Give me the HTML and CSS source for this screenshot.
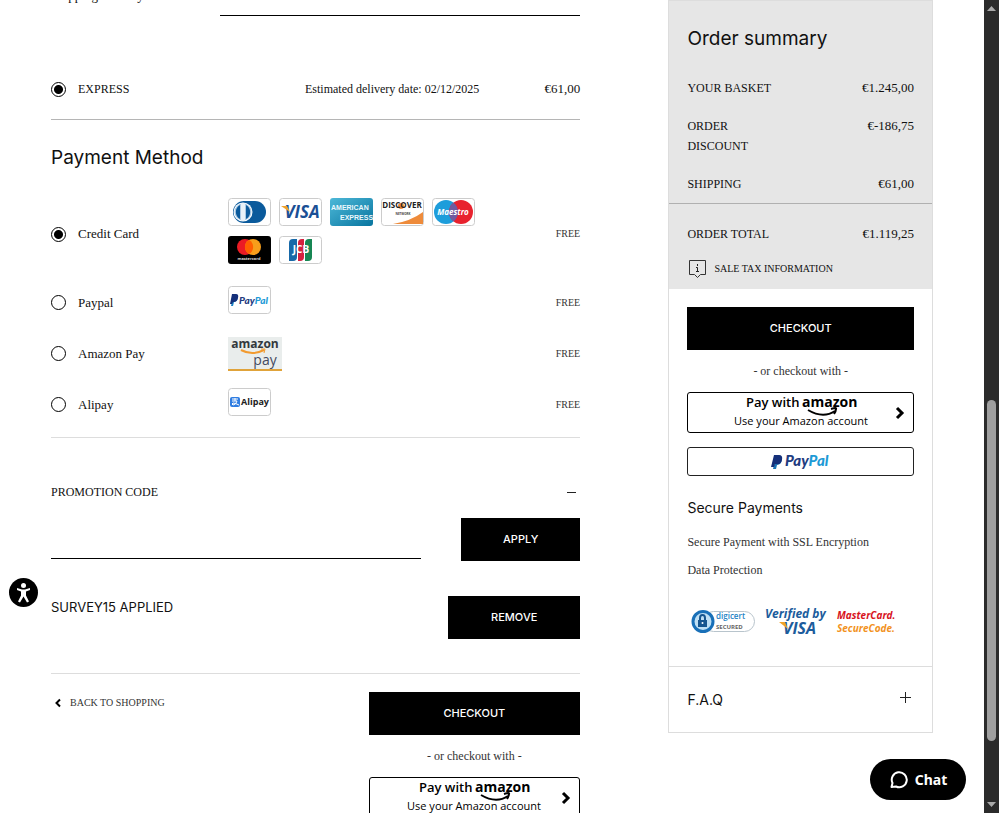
FILE: index.html
```html
<!DOCTYPE html>
<html lang="en">

<head>
    <meta charset="utf-8">
    <meta name="viewport" content="width=device-width, initial-scale=1">
    <title>Checkout</title>
    <link rel="stylesheet" href="styles.css">
</head>

<body>
    <div class="page">
        <main class="checkout">
            <div class="country-row">
                <label for="country">Shipping Country</label>
                <select id="country" class="country-select">
                    <option></option>
                </select>
            </div>

            <div class="shipping-row">
                <label class="choice"><input type="radio" name="shipping" checked><span class="caps">EXPRESS</span></label>
                <span class="note">Estimated delivery date: 02/12/2025</span>
                <span class="price">€61,00</span>
            </div>

            <h2 class="section-title">Payment Method</h2>
            <div class="methods">
                <div class="method method-cards">
                    <label class="choice"><input type="radio" name="payment" checked>Credit Card</label>
                    <div class="cards">
                        <svg class="card" viewBox="0 0 43 28">
                            <rect x=".5" y=".5" width="42" height="27" rx="3" fill="#fff" stroke="#ccc"/>
                            <path d="M15 3h12a11 11 0 0 1 0 22H15z" fill="#0a5a9c"/>
                            <circle cx="16" cy="14" r="11" fill="#0a5a9c"/>
                            <circle cx="15" cy="14" r="9.5" fill="#fff"/>
                            <circle cx="15" cy="14" r="8.5" fill="#a9c9e4"/>
                            <path d="M12 7a8 8 0 0 0 0 14zM18 7a8 8 0 0 1 0 14z" fill="#0a5a9c"/>
                            <path d="M13 5h4v18h-4z" fill="#e8f1f8"/>
                        </svg>
                        <svg class="card" viewBox="0 0 43 28">
                            <rect x=".5" y=".5" width="42" height="27" rx="3" fill="#fff" stroke="#ccc"/>
                            <text x="23" y="20" text-anchor="middle" class="logo-text logo-italic" font-size="17" fill="#1a4f95">VISA</text>
                            <path d="M2 8h6l3 6z" fill="#f0a32c"/>
                        </svg>
                        <svg class="card" viewBox="0 0 43 28">
                            <defs>
                                <linearGradient id="amex" x2="1" y2="1">
                                    <stop offset="0" stop-color="#4db8d8"/>
                                    <stop offset="1" stop-color="#08759f"/>
                                </linearGradient>
                            </defs>
                            <rect width="43" height="28" rx="3" fill="url(#amex)"/>
                            <text x="1" y="12" class="logo-amex" font-size="7">AMERICAN</text>
                            <text x="10" y="22" class="logo-amex" font-size="7">EXPRESS</text>
                        </svg>
                        <svg class="card" viewBox="0 0 43 28">
                            <rect x=".5" y=".5" width="42" height="27" rx="3" fill="#fff" stroke="#ccc"/>
                            <path d="M12 26q18-3 30-12v12z" fill="#ee8b3b"/>
                            <circle cx="20" cy="8" r="3" fill="#ee8b3b"/>
                            <text x="21" y="10" text-anchor="middle" class="logo-text" font-size="8" fill="#222">DISCOVER</text>
                            <text x="22" y="17" text-anchor="middle" class="logo-text" font-size="3" fill="#444">NETWORK</text>
                        </svg>
                        <svg class="card" viewBox="0 0 43 28">
                            <rect x=".5" y=".5" width="42" height="27" rx="3" fill="#fff" stroke="#ccc"/>
                            <circle cx="14" cy="14" r="12" fill="#1d9ddb"/>
                            <circle cx="29" cy="14" r="12" fill="#e8222e"/>
                            <path d="M21.500 4.600a12 12 0 0 1 0 18.800a12 12 0 0 1 0-18.800z" fill="#705aa0"/>
                            <text x="21" y="17" text-anchor="middle" class="logo-text logo-italic" font-size="8" fill="#fff">Maestro</text>
                        </svg>
                        <svg class="card" viewBox="0 0 43 28">
                            <rect width="43" height="28" rx="3"/>
                            <circle cx="17" cy="11" r="8" fill="#eb1b24"/>
                            <circle cx="25" cy="11" r="8" fill="#f79e1b"/>
                            <path d="M21 4a8 8 0 0 1 0 14a8 8 0 0 1 0-14z" fill="#ff5f00"/>
                            <text x="21" y="24" text-anchor="middle" class="logo-text" font-size="4" fill="#ddd">mastercard</text>
                        </svg>
                        <svg class="card" viewBox="0 0 43 28">
                            <rect x=".5" y=".5" width="42" height="27" rx="3" fill="#fff" stroke="#ccc"/>
                            <path d="M14 3h4v18q0 4-4 4h-4V7q0-4 4-4z" fill="#1769a8"/>
                            <path d="M23 3h2v18q0 4-4 4h-2V7q0-4 4-4z" fill="#d4213f"/>
                            <path d="M30 3h3v18q0 4-4 4h-3V7q0-4 4-4z" fill="#168653"/>
                            <text x="22" y="17" text-anchor="middle" class="logo-text" font-size="10" fill="#fff">JCB</text>
                        </svg>
                    </div>
                    <span class="fee">FREE</span>
                </div>
                <div class="method">
                    <label class="choice"><input type="radio" name="payment">Paypal</label>
                    <div class="cards">
                        <svg class="card" viewBox="0 0 43 28">
                            <rect x=".5" y=".5" width="42" height="27" rx="3" fill="#fff" stroke="#ccc"/>
                            <path d="M9 10q2 5-3 6l-1 4H3l1-4z" fill="#1b84c6"/>
                            <path d="M4 8h4q3 0 2 4t-4 4H5l-1 2H2z" fill="#15307a"/>
                            <text x="11" y="18" class="logo-paypal" font-size="10"><tspan fill="#213b80">Pay</tspan><tspan fill="#1d9ad6">Pal</tspan></text>
                        </svg>
                    </div>
                    <span class="fee">FREE</span>
                </div>
                <div class="method">
                    <label class="choice"><input type="radio" name="payment">Amazon Pay</label>
                    <svg class="amazon-card" viewBox="0 0 54 34">
                        <rect width="54" height="34" fill="#e9edec"/>
                        <rect y="32" width="54" height="2" fill="#e0a33a"/>
                        <text x="27" y="11" text-anchor="middle" class="logo-text" font-size="12" fill="#33393d">amazon</text>
                        <path d="M13 13q11 6 23 0" fill="none" stroke="#f29a2e" stroke-width="2"/>
                        <path d="M33 12h4l-1 4" fill="none" stroke="#f29a2e"/>
                        <text x="37" y="28" text-anchor="middle" class="logo-pay" font-size="14">pay</text>
                    </svg>
                    <span class="fee">FREE</span>
                </div>
                <div class="method">
                    <label class="choice"><input type="radio" name="payment">Alipay</label>
                    <div class="cards">
                        <svg class="card" viewBox="0 0 43 28">
                            <rect x=".5" y=".5" width="42" height="27" rx="3" fill="#fff" stroke="#ccc"/>
                            <rect x="2" y="9" width="10" height="10" rx="2" fill="#2f7de1"/>
                            <path d="M4 11h6M7 10v3M4 13h5q-1 4-4 4q-2-1 0-2q2 0 6 2" fill="none" stroke="#fff"/>
                            <text x="27" y="17" text-anchor="middle" class="logo-text" font-size="9" fill="#222">Alipay</text>
                        </svg>
                    </div>
                    <span class="fee">FREE</span>
                </div>
            </div>

            <div class="promo">
                <label class="promo-head" for="promo">
                    <span class="caps">PROMOTION CODE</span>
                    <svg class="sign" viewBox="0 0 17 12"><path d="M4 6.500h9" stroke="#222"/></svg>
                </label>
                <div class="promo-form">
                    <input type="text" id="promo" class="promo-input">
                    <button class="btn btn-apply">APPLY</button>
                </div>
                <div class="promo-applied">
                    <span class="applied">SURVEY15 APPLIED</span>
                    <button class="btn btn-remove">REMOVE</button>
                </div>
            </div>

            <div class="actions">
                <a class="back" href="#">
                    <svg class="back-icon" viewBox="0 0 8 10"><path d="M6 1.500L2.500 5L6 8.500" fill="none" stroke="#000" stroke-width="2"/></svg>
                    BACK TO SHOPPING
                </a>
                <div class="pay-buttons">
                    <button class="btn">CHECKOUT</button>
                    <p class="or">- or checkout with -</p>
                    <button class="amazon-btn">
                        <svg class="amazon-logo" viewBox="0 0 140 39">
                            <text x="15" y="14" class="amazon-with" font-size="13">Pay with</text>
                            <text x="71" y="14" class="logo-text" font-size="14">amazon</text>
                            <path d="M77 17q15 9 27 1" fill="none" stroke="#000" stroke-width="2"/>
                            <path d="M100 16q6-2 5 0q0 2-2 5" fill="none" stroke="#000" stroke-width="2"/>
                            <text x="70" y="32" text-anchor="middle" class="amazon-use" font-size="11">Use your Amazon account</text>
                        </svg>
                        <svg class="amazon-arrow" viewBox="0 0 10 14"><path d="M2 2l5 5l-5 5" fill="none" stroke="#000" stroke-width="3"/></svg>
                    </button>
                </div>
            </div>
        </main>

        <aside class="summary">
            <div class="totals">
                <h2 class="section-title">Order summary</h2>
                <dl class="lines">
                    <div class="line"><dt>YOUR BASKET</dt><dd>€1.245,00</dd></div>
                    <div class="line"><dt>ORDER DISCOUNT</dt><dd>€-186,75</dd></div>
                    <div class="line"><dt>SHIPPING</dt><dd>€61,00</dd></div>
                </dl>
                <dl class="grand">
                    <div class="line"><dt>ORDER TOTAL</dt><dd>€1.119,25</dd></div>
                </dl>
                <div class="tax">
                    <svg class="tax-icon" viewBox="0 0 20 20">
                        <path d="M2.500 1.500h16v14h-5l-3 3l-3-3h-5z" fill="none" stroke="#333"/>
                        <path d="M10.500 5v2M9 8.500h1.500v4M9 12.500h3" fill="none" stroke="#222"/>
                    </svg>
                    SALE TAX INFORMATION
                </div>
            </div>
            <div class="secure">
                <button class="btn">CHECKOUT</button>
                <p class="or">- or checkout with -</p>
                <button class="amazon-btn">
                    <svg class="amazon-logo" viewBox="0 0 140 39">
                        <text x="15" y="14" class="amazon-with" font-size="13">Pay with</text>
                        <text x="71" y="14" class="logo-text" font-size="14">amazon</text>
                        <path d="M77 17q15 9 27 1" fill="none" stroke="#000" stroke-width="2"/>
                        <path d="M100 16q6-2 5 0q0 2-2 5" fill="none" stroke="#000" stroke-width="2"/>
                        <text x="70" y="32" text-anchor="middle" class="amazon-use" font-size="11">Use your Amazon account</text>
                    </svg>
                    <svg class="amazon-arrow" viewBox="0 0 10 14"><path d="M2 2l5 5l-5 5" fill="none" stroke="#000" stroke-width="3"/></svg>
                </button>
                <button class="paypal-btn">
                    <svg class="paypal-logo" viewBox="0 0 60 18">
                        <path d="M10 5q2 6-4 7l-1 4H2l1-4z" fill="#1b74b6"/>
                        <path d="M3 2h5q4 0 3 5t-6 4H4l-1 3H0z" fill="#15307a"/>
                        <text x="14" y="13" class="logo-paypal" font-size="15"><tspan fill="#213b80">Pay</tspan><tspan fill="#1d9ad6">Pal</tspan></text>
                    </svg>
                </button>
                <h3 class="secure-title">Secure Payments</h3>
                <p class="secure-text">Secure Payment with SSL Encryption</p>
                <p class="secure-text">Data Protection</p>
                <div class="badges">
                    <svg class="badge badge-digicert" viewBox="0 0 64 28">
                        <rect x="12.500" y="4.500" width="51" height="20" rx="10" fill="#fff" stroke="#b8c4cc"/>
                        <circle cx="12" cy="14.500" r="10" fill="#bfe0f5" stroke="#1970b8" stroke-width="3"/>
                        <rect x="7" y="13" width="9" height="7" fill="#17568f"/>
                        <path d="M9 13v-2a2.500 3 0 0 1 5 0v2" fill="none" stroke="#17568f" stroke-width="2"/>
                        <circle cx="11.500" cy="16" r="1" fill="#fff"/>
                        <text x="25" y="12" class="digicert" font-size="8">digicert</text>
                        <text x="25" y="22" class="logo-text" font-size="6" fill="#666">SECURED</text>
                    </svg>
                    <svg class="badge badge-visa" viewBox="0 0 62 28">
                        <text x="0" y="11" class="logo-text logo-italic" font-size="12" fill="#1c5c9c">Verified by</text>
                        <text x="18" y="27" class="logo-text logo-italic" font-size="16" fill="#1c5c9c">VISA</text>
                        <path d="M14 15h6l3 7z" fill="#f0a32c"/>
                    </svg>
                    <svg class="badge badge-mc" viewBox="0 0 62 28">
                        <text x="0" y="12" class="logo-text logo-italic" font-size="10" fill="#d8131d">MasterCard.</text>
                        <text x="0" y="25" class="logo-text logo-italic" font-size="10" fill="#f29222">SecureCode.</text>
                    </svg>
                </div>
            </div>
            <button class="faq">
                F.A.Q
                <svg class="faq-icon" viewBox="0 0 17 17"><path d="M3 6.500h11M8.500 1v11" stroke="#222"/></svg>
            </button>
        </aside>
    </div>

    <button class="access" aria-label="Accessibility">
        <svg viewBox="0 0 29 29">
            <circle cx="14.500" cy="7.500" r="2.500" fill="#fff"/>
            <path d="M8 10l5 1.500h3l5-1.500v2l-4 1.500v4l3 6-2 1-3.500-6-3.500 6-2-1 3-6v-4L8 12z" fill="#fff"/>
        </svg>
    </button>

    <button class="chat">
        <svg class="chat-icon" viewBox="0 0 19 19"><path d="M2.500 17l1-4A7.500 7.500 0 1 1 7 16.500z" fill="none" stroke="#fff" stroke-width="2" stroke-linejoin="round"/></svg>
        Chat
    </button>

    <div class="scrollbar">
        <svg class="scroll-arrow" viewBox="0 0 15 15"><path d="M3 11l4.500-5l4.500 5z" fill="#aaa"/></svg>
        <div class="scroll-track">
            <div class="scroll-thumb"></div>
        </div>
        <svg class="scroll-arrow" viewBox="0 0 15 15"><path d="M3 4l4.500 5l4.500-5z" fill="#aaa"/></svg>
    </div>
</body>

</html>
```
FILE: styles.css
```css
* {
    box-sizing: border-box;
}

html {
    overflow: hidden;
}

body {
    margin: 0;
    height: 100vh;
    overflow: hidden;
    background-color: #fff;
    color: #111;
    font-family: "Liberation Serif", serif;
    font-size: 13px;
    line-height: 20px;
}

h2, h3, p, dl, dd {
    margin: 0;
}

svg {
    display: block;
}

button {
    font-family: Inter, sans-serif;
    padding: 0;
    cursor: pointer;
}

/* the page is scrolled part way through the shipping form */
.page {
    display: flex;
    justify-content: space-between;
    align-items: flex-start;
    margin: -24px 15px 0 0;
    padding: 0 51px;
}

.checkout {
    width: 60%;
}

.section-title {
    font-family: Inter, sans-serif;
    font-size: 19px;
    font-weight: 400;
    line-height: 28px;
}

.caps,
.line dt {
    font-size: 12px;
}

/* Shipping */
.country-row {
    display: flex;
    align-items: center;
    justify-content: space-between;
    height: 40px;
}

.country-select {
    width: 68%;
    height: 40px;
    appearance: none;
    background: none;
    border: none;
    border-bottom: 1px solid #000;
}

.shipping-row {
    display: grid;
    grid-template-columns: 254px 1fr auto;
    align-items: center;
    margin-top: 43px;
    padding: 20px 0;
    border-bottom: 1px solid #b5b5b5;
}

.choice {
    display: flex;
    align-items: center;
    gap: 12px;
}

.choice input {
    appearance: none;
    width: 15px;
    height: 15px;
    margin: 0;
    border: 1px solid #000;
    border-radius: 50%;
}

.choice input:checked {
    background: radial-gradient(circle, #000 4px, #fff 5px);
}

.note {
    font-size: 12px;
}

/* Payment methods */
.checkout .section-title {
    margin-top: 24px;
}

.methods {
    margin-top: 19px;
    padding-bottom: 7px;
    border-bottom: 1px solid #ddd;
}

.method {
    display: grid;
    grid-template-columns: 177px 1fr auto;
    align-items: center;
    min-height: 51px;
}

.method-cards {
    min-height: 86px;
}

.cards {
    display: flex;
    flex-wrap: wrap;
    gap: 10px 8px;
    max-width: 256px;
    padding-bottom: 6px;
}

.card {
    width: 43px;
    height: 28px;
}

.amazon-card {
    width: 54px;
    height: 34px;
}

.fee {
    font-size: 10px;
    color: #333;
}

.logo-text {
    font-family: "Open Sans", sans-serif;
    font-weight: 700;
}

.logo-italic {
    font-style: italic;
}

.logo-amex {
    font-family: "Liberation Sans", sans-serif;
    font-weight: 700;
    fill: #eaf8fd;
}

.logo-paypal {
    font-family: Lato, sans-serif;
    font-weight: 900;
    font-style: italic;
}

.logo-pay {
    font-family: "Open Sans", sans-serif;
    fill: #444a60;
}

/* Promotion code */
.promo {
    padding: 44px 0 34px;
    border-bottom: 1px solid #ddd;
}

.promo-head {
    display: flex;
    align-items: center;
    justify-content: space-between;
}

.sign {
    width: 17px;
    height: 12px;
}

.promo-form {
    display: flex;
    gap: 40px;
    margin-top: 16px;
}

.promo-input {
    flex: 1;
    min-width: 0;
    height: 41px;
    border: none;
    border-bottom: 1px solid #000;
}

.promo-applied {
    display: flex;
    justify-content: space-between;
    margin-top: 35px;
}

.applied {
    font-family: Inter, sans-serif;
    padding-top: 1px;
}

.btn {
    display: block;
    width: 100%;
    height: 43px;
    padding-bottom: 2px;
    border: none;
    background-color: #000;
    color: #fff;
    font-size: 11px;
    font-weight: 500;
}

.btn-apply {
    width: 119px;
}

.btn-remove {
    width: 132px;
}

/* Bottom buttons */
.actions {
    display: flex;
    justify-content: space-between;
    align-items: flex-start;
    padding-top: 18px;
}

.back {
    display: flex;
    align-items: center;
    gap: 8px;
    padding-top: 1px;
    padding-left: 3px;
    color: #333;
    font-size: 10px;
    text-decoration: none;
}

.back-icon {
    width: 8px;
    height: 10px;
}

.pay-buttons {
    width: 40%;
}

.or {
    margin: 11px 0;
    color: #333;
    font-size: 12px;
    text-align: center;
}

.amazon-btn {
    display: grid;
    grid-template-columns: 1fr auto 1fr;
    align-items: center;
    width: 100%;
    height: 41px;
    padding-right: 8px;
    padding-left: 8px;
    border: 1px solid #000;
    border-radius: 3px;
    background-color: #fff;
}

.amazon-logo {
    grid-column: 2;
    width: 140px;
    height: 39px;
}

.amazon-arrow {
    justify-self: end;
    width: 10px;
    height: 14px;
}

.amazon-with,
.amazon-use {
    font-family: "Open Sans", sans-serif;
    font-weight: 600;
}

.amazon-use {
    font-weight: 500;
}

/* Order summary */
.summary {
    width: 30%;
    margin-top: 24px;
    border: 1px solid #ddd;
}

.totals {
    padding: 24px 0 10px;
    background-color: #e6e6e6;
}

.totals .section-title {
    padding: 0 18px;
}

.lines {
    display: grid;
    gap: 18px;
    margin-top: 25px;
    padding: 0 18px 9px;
    border-bottom: 1px solid #b0b0b0;
}

.line {
    display: flex;
    justify-content: space-between;
}

.line dt {
    max-width: 45%;
}

.grand {
    padding: 20px 18px 0;
}

.tax {
    display: flex;
    align-items: center;
    gap: 7px;
    margin-top: 15px;
    padding: 0 18px;
    font-size: 10px;
}

.tax-icon {
    width: 20px;
    height: 20px;
}

.secure {
    padding: 18px 18px 31px;
}

.paypal-btn {
    display: flex;
    align-items: center;
    justify-content: center;
    width: 100%;
    height: 29px;
    margin-top: 14px;
    border: 1px solid #222;
    border-radius: 3px;
    background-color: #fff;
}

.paypal-logo {
    width: 60px;
    height: 18px;
}

.secure-title {
    margin: 22px 0 14px;
    font-family: Inter, sans-serif;
    font-size: 14px;
    font-weight: 400;
}

.secure-text {
    margin-bottom: 8px;
    color: #333;
    font-size: 12px;
}

.badges {
    display: flex;
    gap: 10px;
    margin-top: 27px;
    padding-left: 4px;
}

.badge {
    height: 28px;
    overflow: visible;
}

.badge-digicert {
    width: 64px;
}

.badge-visa,
.badge-mc {
    width: 62px;
}

.digicert {
    font-family: "Open Sans", sans-serif;
    font-weight: 600;
    fill: #2483c5;
}

.faq {
    display: flex;
    align-items: center;
    justify-content: space-between;
    width: 100%;
    height: 66px;
    padding: 0 18px;
    border: none;
    border-top: 1px solid #ddd;
    background: none;
    color: #111;
    font-size: 14px;
}

.faq-icon {
    width: 17px;
    height: 17px;
}

/* Floating controls */
.access {
    position: fixed;
    left: 9px;
    bottom: 206px;
    width: 29px;
    height: 29px;
    border: none;
    border-radius: 50%;
    background-color: #000;
}

.chat {
    position: fixed;
    right: 33px;
    bottom: 13px;
    display: flex;
    align-items: center;
    justify-content: center;
    gap: 7px;
    width: 96px;
    height: 41px;
    border: none;
    border-radius: 21px;
    background-color: #000;
    color: #fff;
    font-family: "Noto Sans", sans-serif;
    font-size: 14px;
    font-weight: 700;
}

.chat-icon {
    width: 19px;
    height: 19px;
}

.scrollbar {
    position: fixed;
    top: 0;
    right: 0;
    bottom: 0;
    display: flex;
    flex-direction: column;
    width: 15px;
    background-color: #2b2b2b;
}

.scroll-arrow {
    width: 15px;
    height: 15px;
}

.scroll-track {
    display: flex;
    flex: 1;
    flex-direction: column;
    justify-content: flex-end;
    align-items: center;
    padding-bottom: 57px;
}

.scroll-thumb {
    width: 9px;
    height: 47%;
    border-radius: 5px;
    background-color: #9f9f9f;
}
```
